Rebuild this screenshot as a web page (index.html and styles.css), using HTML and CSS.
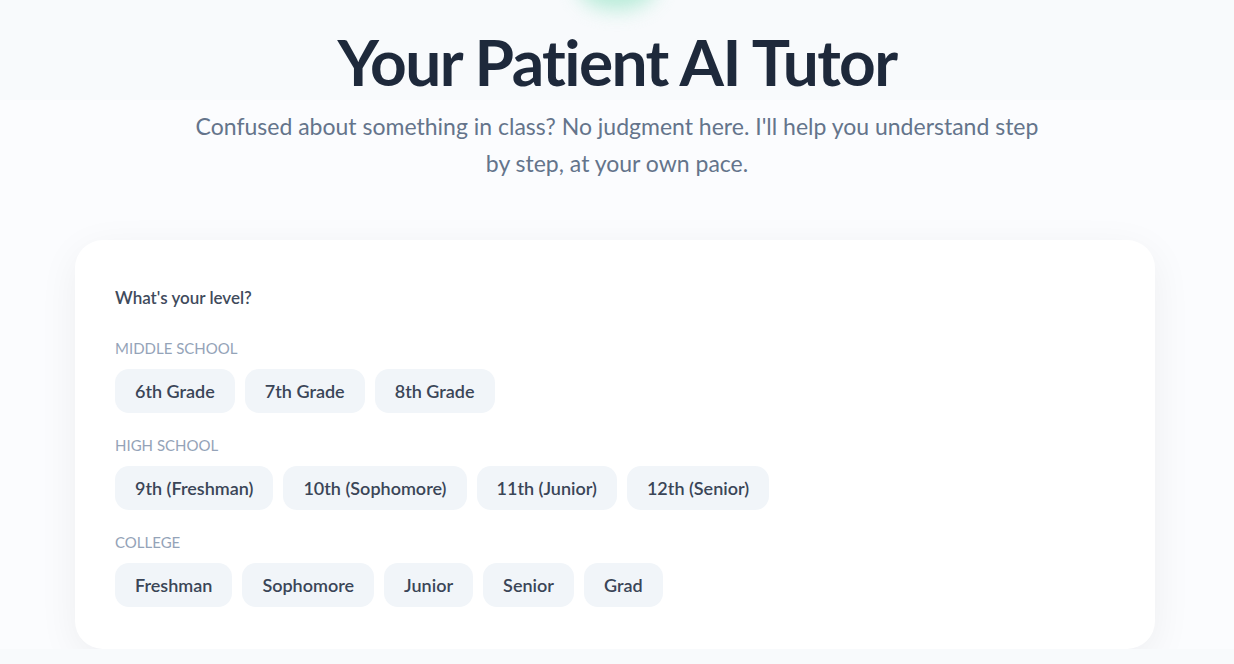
FILE: index.html
```html
<!DOCTYPE html>
<html lang="en">
<head>
  <meta charset="UTF-8" />
  <meta name="viewport" content="width=device-width, initial-scale=1.0"/>
  <title>Your Patient AI Tutor</title>
  <link rel="stylesheet" href="styles.css">
</head>
<body>
  <div class="glow"></div>

  <header class="hero">
    <h1>Your Patient AI Tutor</h1>
    <p>Confused about something in class? No judgment here. I'll help you understand step by step, at your own pace.</p>
  </header>

  <main class="card">
    <h2>What's your level?</h2>

    <div class="group">
      <div class="group-label">Middle School</div>
      <div class="chips">
        <button class="chip">6th Grade</button>
        <button class="chip">7th Grade</button>
        <button class="chip">8th Grade</button>
      </div>
    </div>

    <div class="group">
      <div class="group-label">High School</div>
      <div class="chips">
        <button class="chip">9th (Freshman)</button>
        <button class="chip">10th (Sophomore)</button>
        <button class="chip">11th (Junior)</button>
        <button class="chip">12th (Senior)</button>
      </div>
    </div>

    <div class="group">
      <div class="group-label">College</div>
      <div class="chips">
        <button class="chip">Freshman</button>
        <button class="chip">Sophomore</button>
        <button class="chip">Junior</button>
        <button class="chip">Senior</button>
        <button class="chip">Grad</button>
      </div>
    </div>
  </main>
</body>
</html>
```

FILE: styles.css
```css
body {
  margin: 0;
  font-family: 'Segoe UI', Lato, 'Noto Sans', sans-serif;
  background: linear-gradient(to bottom, #f8fafc 0, #f8fafc 100px, #fbfcfe 100px);
  color: #1e293b;
  overflow: hidden;
  position: relative;
}

.glow {
  position: absolute;
  top: -40px;
  left: 50%;
  width: 80px;
  height: 50px;
  margin-left: -40px;
  border-radius: 50%;
  background: #a7e8cf;
  filter: blur(10px);
  opacity: 0.8;
}

.hero {
  text-align: center;
  padding-top: 25px;
}

.hero h1 {
  margin: 0;
  font-size: 64px;
  font-weight: 700;
  letter-spacing: -0.025em;
  line-height: 1.15;
  color: #1e293b;
}

.hero p {
  margin: 9px auto 0;
  max-width: 850px;
  font-size: 23px;
  line-height: 37px;
  color: #64748b;
}

.card {
  margin: 58px 79px 0 75px;
  background: #fff;
  border-radius: 28px;
  padding: 40px 40px 42px;
  box-shadow: 0 10px 40px rgba(15, 23, 42, 0.06);
}

.card h2 {
  margin: 0;
  font-size: 17px;
  font-weight: 600;
  line-height: 36px;
  color: #3f4b5c;
}

.group {
  margin-top: 22px;
}

.group-label {
  font-size: 15px;
  line-height: 20px;
  text-transform: uppercase;
  color: #94a3b8;
  margin-bottom: 11px;
}

.chips {
  display: flex;
  flex-wrap: wrap;
  gap: 10px;
}

.chip {
  font-family: inherit;
  font-size: 18px;
  font-weight: 600;
  color: #3a4557;
  background: #f1f5f9;
  border: none;
  border-radius: 14px;
  height: 44px;
  padding: 0 20px;
  cursor: pointer;
}
```
